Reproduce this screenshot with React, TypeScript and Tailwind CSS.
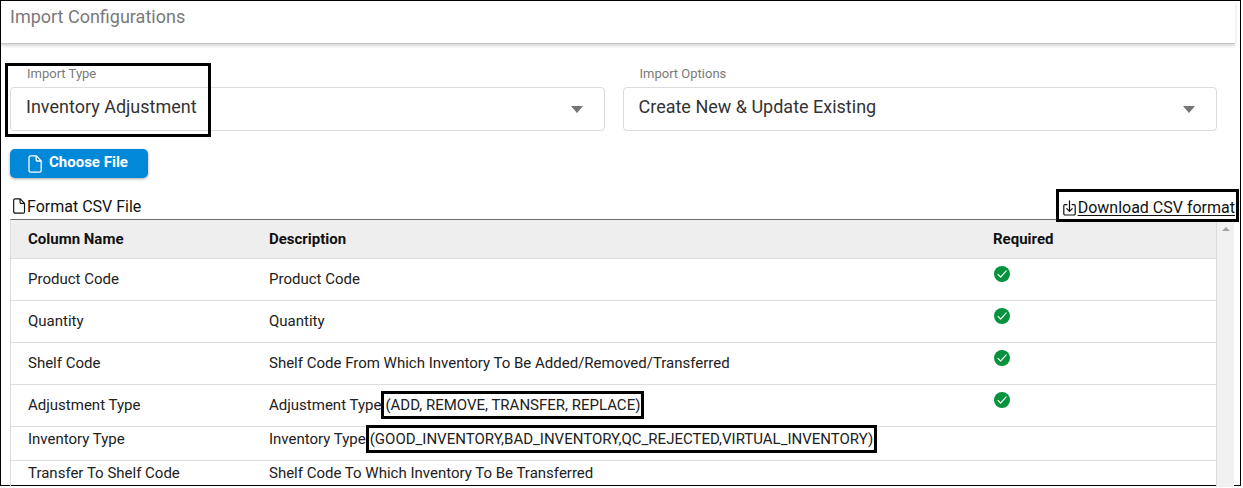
import { useId, useState } from "react";

type Column = {
  name: string;
  description: string;
  values?: string;
  required?: boolean;
};

const columns: Column[] = [
  { name: "Product Code", description: "Product Code", required: true },
  { name: "Quantity", description: "Quantity", required: true },
  {
    name: "Shelf Code",
    description: "Shelf Code From Which Inventory To Be Added/Removed/Transferred",
    required: true,
  },
  {
    name: "Adjustment Type",
    description: "Adjustment Type",
    values: "(ADD, REMOVE, TRANSFER, REPLACE)",
    required: true,
  },
  {
    name: "Inventory Type",
    description: "Inventory Type",
    values: "(GOOD_INVENTORY,BAD_INVENTORY,QC_REJECTED,VIRTUAL_INVENTORY)",
  },
  {
    name: "Transfer To Shelf Code",
    description: "Shelf Code To Which Inventory To Be Transferred",
  },
];

function FileIcon({ className }: { className: string }) {
  return (
    <svg
      viewBox="0 0 14 18"
      className={className}
      fill="none"
      stroke="currentColor"
      strokeWidth="1.3"
      strokeLinejoin="round"
      aria-hidden="true"
    >
      <path d="M2.6.9h5.8L13.2 6v9.5a1.6 1.6 0 0 1-1.6 1.6h-9A1.6 1.6 0 0 1 1 15.5v-13A1.6 1.6 0 0 1 2.6.9z" />
      <path d="M8.2 1v4.2a.8.8 0 0 0 .8.8h4.2" />
    </svg>
  );
}

function DownloadIcon() {
  return (
    <svg
      viewBox="0 0 13 16"
      className="h-4 w-[13px]"
      fill="none"
      stroke="currentColor"
      strokeWidth="1.2"
      strokeLinecap="round"
      strokeLinejoin="round"
      aria-hidden="true"
    >
      <path d="M4 4.6H2A1.2 1.2 0 0 0 .8 5.8v8A1.2 1.2 0 0 0 2 15h9a1.2 1.2 0 0 0 1.2-1.2v-8A1.2 1.2 0 0 0 11 4.6H9" />
      <path d="M6.5.8v10.4M3.8 8.6l2.7 2.7 2.7-2.7" />
    </svg>
  );
}

function CheckIcon() {
  return (
    <svg viewBox="0 0 16 16" className="size-4" role="img" aria-label="Required">
      <circle cx="8" cy="8" r="8" fill="#07923d" />
      <path
        d="M4 8.4l2.6 2.8 5.6-6.4"
        fill="none"
        stroke="#fff"
        strokeWidth="1.1"
        strokeLinecap="round"
        strokeLinejoin="round"
      />
    </svg>
  );
}

function SelectField({
  label,
  options,
  highlighted = false,
}: {
  label: string;
  options: string[];
  highlighted?: boolean;
}) {
  const id = useId();
  const [value, setValue] = useState(options[0]);

  return (
    <div className="relative">
      <label htmlFor={id} className="block pl-[17px] text-[13px] leading-5 text-[#7a7a7a]">
        {label}
      </label>
      <div className="relative mt-[3px]">
        <select
          id={id}
          value={value}
          onChange={(e) => setValue(e.target.value)}
          className="h-11 w-full appearance-none rounded border border-[#dcdcdc] bg-white pr-10 pb-1 pl-[15px] text-lg text-[#333] outline-none"
        >
          {options.map((option) => (
            <option key={option}>{option}</option>
          ))}
        </select>
        <svg
          viewBox="0 0 12 7"
          className="pointer-events-none absolute top-[19px] right-[22px] h-[7px] w-3"
          aria-hidden="true"
        >
          <path d="M0 0h12L6 7z" fill="#757575" />
        </svg>
      </div>
      {highlighted && (
        <div className="pointer-events-none absolute -top-px -bottom-1.5 -left-[5px] w-[206px] border-3 border-black" />
      )}
    </div>
  );
}

export default function App() {
  return (
    <div className="h-screen overflow-hidden bg-white pr-0.5 pb-0.5 font-['Roboto',sans-serif] text-[#212121]">
      <main className="flex h-full flex-col border border-black">
        <header className="mr-[5px] border-b border-[#c4c4c4] pb-3 pl-[9px] shadow-[0_2px_3px_rgba(0,0,0,0.16)]">
          <h1 className="pt-0.5 text-lg leading-7 text-[#7a7a7a]">Import Configurations</h1>
        </header>

        <section className="grid grid-cols-2 gap-[18px] pt-5 pr-[23px] pl-[9px]">
          <SelectField label="Import Type" options={["Inventory Adjustment"]} highlighted />
          <SelectField label="Import Options" options={["Create New & Update Existing"]} />
        </section>

        <div className="mt-[18px] pl-[9px]">
          <button
            type="button"
            className="flex h-[29px] items-center gap-[7px] rounded-[5px] bg-[#0288d8] pr-5 pl-[18px] text-[15px] font-bold text-white shadow-[0_1px_3px_rgba(0,0,0,0.35)]"
          >
            <FileIcon className="h-[18px] w-3.5" />
            <span className="pb-0.5">Choose File</span>
          </button>
        </div>

        <div className="mt-[11px] flex items-end justify-between pl-[10px]">
          <div className="flex items-center text-base text-[#111]">
            <FileIcon className="mb-0.5 h-4 w-4" />
            <span>Format CSV File</span>
          </div>
          <a
            href="#download"
            className="relative z-10 mr-px -mb-[3px] flex h-[33px] items-center gap-0.5 border-3 border-black bg-white pt-1 pr-px pl-1 text-base text-[#111]"
          >
            <DownloadIcon />
            <span className="underline underline-offset-2">Download CSV format</span>
          </a>
        </div>

        <div className="-mb-0.5 flex min-h-0 flex-1 pr-1.5 pl-[9px]">
          <div className="min-w-0 flex-1 overflow-hidden border-t border-r border-l border-t-[#6b6b6b] border-r-[#dcdcdc] border-l-[#dcdcdc]">
            <table className="w-full table-fixed text-left text-[15px] leading-5">
              <thead>
                <tr className="h-[38px] border-b border-[#dcdcdc] bg-[#eee] text-[#111]">
                  <th className="w-1/5 pl-[17px] font-bold">Column Name</th>
                  <th className="w-3/5 pl-[17px] font-bold">Description</th>
                  <th className="w-1/5 pl-[18px] font-bold">Required</th>
                </tr>
              </thead>
              <tbody>
                {columns.map((column) => (
                  <tr
                    key={column.name}
                    className={
                      column.required
                        ? "h-[42px] border-b border-[#dcdcdc]"
                        : "h-[34px] border-b border-[#dcdcdc] *:pb-2"
                    }
                  >
                    <td className="pl-[17px]">{column.name}</td>
                    <td className="pl-[17px]">
                      {column.description}
                      {column.values && (
                        <span className="relative ml-1">
                          {column.values}
                          <span className="pointer-events-none absolute -inset-x-1 -inset-y-[5px] border-3 border-black" />
                        </span>
                      )}
                    </td>
                    <td className="pt-[7px] pl-[19px] align-top">{column.required && <CheckIcon />}</td>
                  </tr>
                ))}
              </tbody>
            </table>
          </div>
          <div className="flex w-[17px] justify-center bg-[#f1f1f1] pt-2" aria-hidden="true">
            <svg viewBox="0 0 8 4" className="h-1 w-2">
              <path d="M0 4h8L4 0z" fill="#a3a3a3" />
            </svg>
          </div>
        </div>
      </main>
    </div>
  );
}
